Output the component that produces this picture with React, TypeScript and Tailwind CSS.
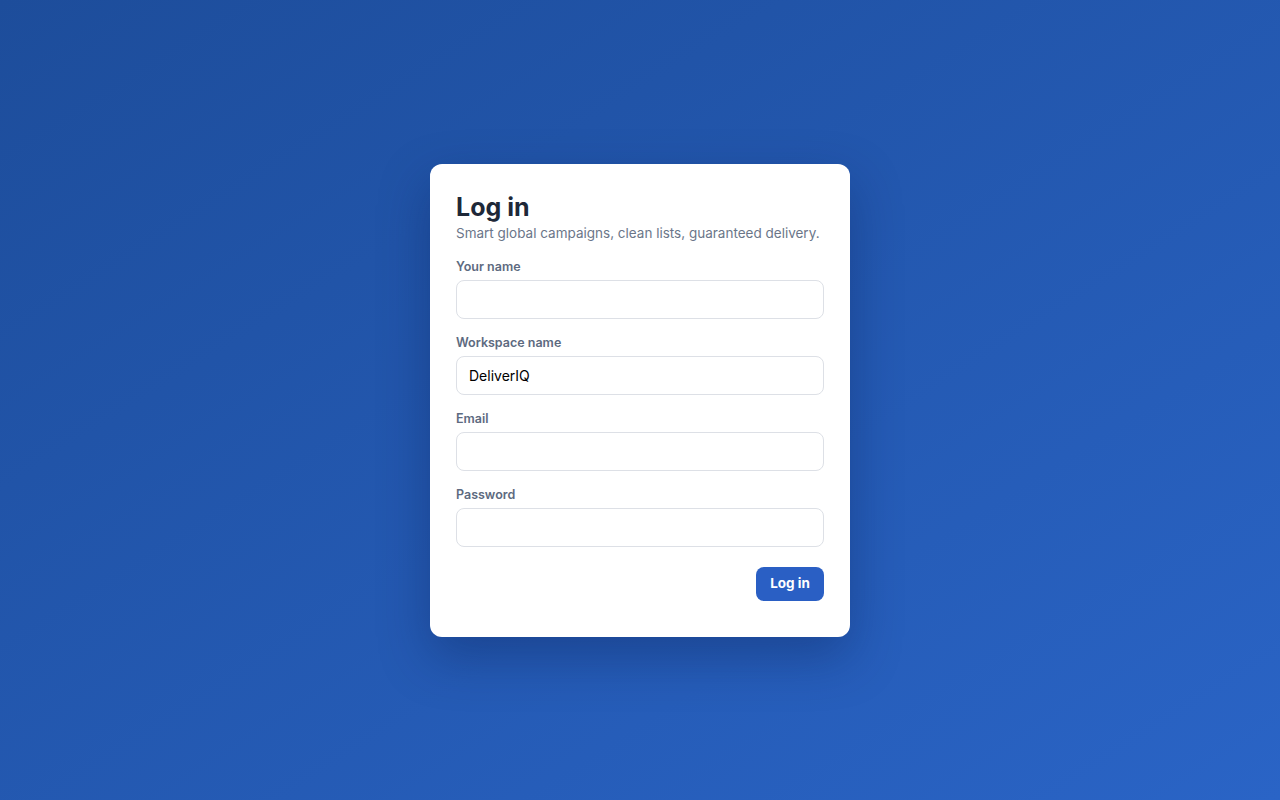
import React from "react";

const fields = [
  { label: "Your name", value: "", type: "text" },
  { label: "Workspace name", value: "DeliverIQ", type: "text" },
  { label: "Email", value: "", type: "email" },
  { label: "Password", value: "", type: "password" },
];

export default function App() {
  return (
    <div
      className="flex h-[800px] w-full items-center justify-center bg-gradient-to-br from-[#1d4d9b] to-[#2a64c6]"
      style={{ fontFamily: "Inter, 'Noto Sans', sans-serif" }}
    >
      <div className="w-[420px] rounded-xl bg-white px-[26px] pt-[27px] pb-[36px] shadow-[0_20px_50px_rgba(10,30,80,0.35)]">
        <h1 className="text-[25px] font-bold leading-8 text-[#1e2838]">Log in</h1>
        <p className="mt-0 text-[13.5px] leading-5 text-[#6b7689]">
          Smart global campaigns, clean lists, guaranteed delivery.
        </p>

        <form className="mt-[16px] flex flex-col gap-[16px]" onSubmit={(e) => e.preventDefault()}>
          {fields.map((field) => (
            <label key={field.label} className="flex flex-col gap-[5px]">
              <span className="text-[12.5px] font-semibold leading-4 text-[#5d6a80]">
                {field.label}
              </span>
              <input
                type={field.type}
                defaultValue={field.value}
                className="h-[39px] w-full rounded-lg border border-[#dde0e6] bg-white px-3 text-[14px] text-black outline-none"
              />
            </label>
          ))}

          <div className="mt-[4px] flex justify-end">
            <button
              type="submit"
              className="h-[34px] w-[68px] rounded-lg bg-[#2a5fc4] text-[13.5px] font-bold text-white"
            >
              Log in
            </button>
          </div>
        </form>
      </div>
    </div>
  );
}
